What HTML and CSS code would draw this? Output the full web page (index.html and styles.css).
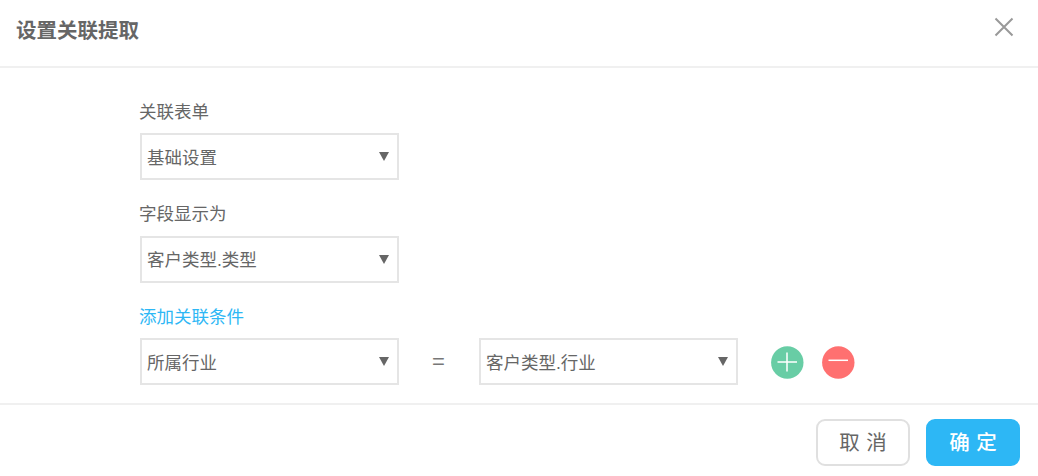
FILE: index.html
```html
<!DOCTYPE html>
<html lang="zh-CN">
<head>
    <meta charset="utf-8" />
    <title>设置关联提取</title>
    <link rel="stylesheet" href="styles.css">
</head>
<body>
<div class="dialog">
    <div class="dialog-header">
        <h3 class="dialog-title">设置关联提取</h3>
        <svg class="dialog-close" width="20" height="20" viewBox="0 0 20 20">
            <path d="M1.5 1.5L18.5 18.5M18.5 1.5L1.5 18.5" />
        </svg>
    </div>
    <div class="dialog-body">
        <div class="field">
            <div class="label">关联表单</div>
            <div class="select"><span>基础设置</span><i class="arrow"></i></div>
        </div>
        <div class="field">
            <div class="label">字段显示为</div>
            <div class="select"><span>客户类型.类型</span><i class="arrow"></i></div>
        </div>
        <div class="field">
            <div class="label"><a class="add-link">添加关联条件</a></div>
            <div class="condition">
                <div class="select"><span>所属行业</span><i class="arrow"></i></div>
                <span class="equal">=</span>
                <div class="select"><span>客户类型.行业</span><i class="arrow"></i></div>
                <div class="icons">
                    <svg width="33" height="33" viewBox="0 0 33 33">
                        <circle cx="16.3" cy="16.5" r="16.2" fill="#68cda5" />
                        <path class="sign" d="M6.5 16H26M16 6.5V25.5" />
                    </svg>
                    <svg width="33" height="33" viewBox="0 0 33 33">
                        <circle cx="16.3" cy="16.5" r="16.2" fill="#ff7070" />
                        <path class="sign" d="M6.5 14.3H26" />
                    </svg>
                </div>
            </div>
        </div>
    </div>
    <div class="dialog-footer">
        <div class="btn">取 消</div>
        <div class="btn btn-primary">确 定</div>
    </div>
</div>
</body>
</html>
```

FILE: styles.css
```css
body {
  margin: 0;
  background: #fff;
  color: #666;
  font: 17.5px/24px "Liberation Sans", "Noto Sans CJK SC", sans-serif;
}
.dialog {
  display: flex;
  flex-direction: column;
  height: 476px;
  overflow: hidden;
}
/* header */
.dialog-header {
  display: flex;
  justify-content: space-between;
  box-sizing: border-box;
  height: 68px;
  padding: 17px 24px 0 16px;
  border-bottom: 2px solid #f0f0f0;
}
.dialog-title {
  margin: 1px 0 0;
  font-size: 20.5px;
  line-height: 26px;
  font-weight: bold;
}
.dialog-close {
  stroke: #999;
  stroke-width: 2;
}
/* body */
.dialog-body {
  box-sizing: border-box;
  height: 335px;
  padding: 32px 0 0 139px;
}
.field {
  height: 102.4px;
}
.label {
  height: 33.3px;
}
.add-link {
  color: #2db7f5;
}
.select {
  display: flex;
  align-items: center;
  justify-content: space-between;
  box-sizing: border-box;
  width: 259px;
  height: 47px;
  margin-left: 1px;
  padding: 0 8px 0 5px;
  border: 2px solid #e5e5e5;
}
.select span {
  padding-top: 2px;
}
.arrow {
  border: solid transparent;
  border-width: 9px 5px 0;
  border-top-color: #666;
}
.condition {
  display: flex;
  align-items: center;
}
.equal {
  width: 79px;
  font-size: 22px;
  text-align: center;
  color: #777;
}
.icons {
  display: flex;
  gap: 18px;
  margin: 2px 0 0 33px;
}
.icons svg {
  display: block;
}
.sign {
  fill: none;
  stroke: #fff;
  stroke-width: 1.5;
}
/* footer */
.dialog-footer {
  display: flex;
  justify-content: flex-end;
  gap: 16px;
  flex: 1;
  padding: 14px 18px 0 0;
  border-top: 2px solid #f0f0f0;
}
.btn {
  box-sizing: border-box;
  width: 94px;
  height: 47px;
  border: 2px solid #e0e0e0;
  border-radius: 9px;
  font-size: 20.5px;
  line-height: 43px;
  text-align: center;
  word-spacing: 1px;
}
.btn-primary {
  border-color: #2db7f5;
  background: #2db7f5;
  color: #fff;
  font-weight: 500;
}
```
